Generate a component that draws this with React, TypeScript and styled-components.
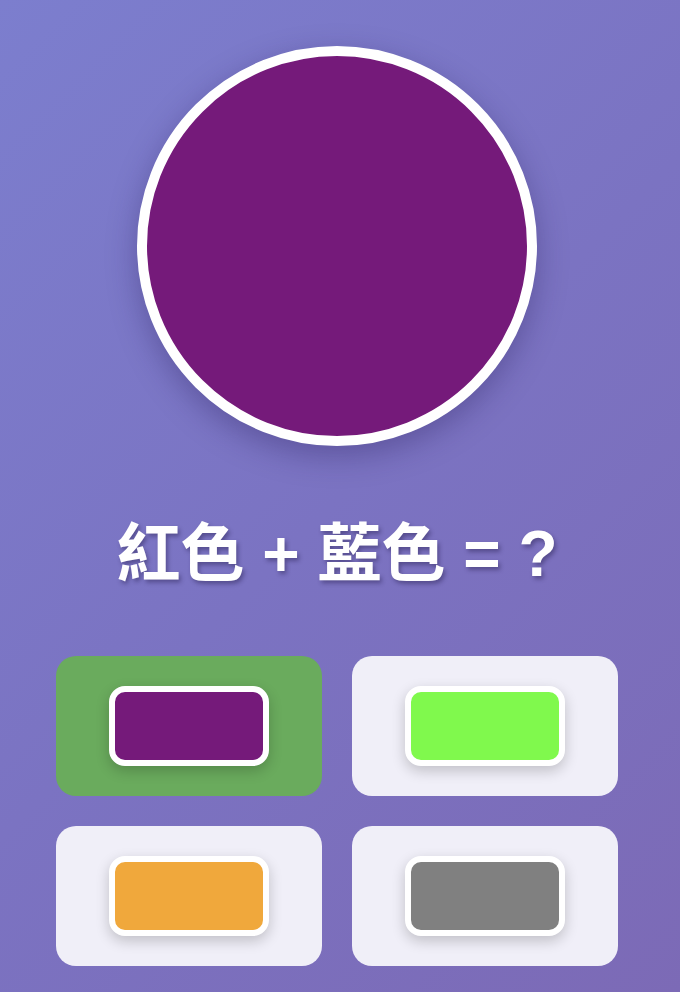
import React from "react";
import styled, { createGlobalStyle } from "styled-components";

const Global = createGlobalStyle`
  html, body { margin: 0; padding: 0; }
  body {
    width: 680px;
    min-height: 992px;
    background: linear-gradient(135deg, #7c7ece 0%, #7b73c2 50%, #7c6ab6 100%);
    font-family: "Liberation Sans", "Noto Sans CJK TC", sans-serif;
    overflow: hidden;
  }
`;

const Page = styled.div`
  width: 674px;
  height: 992px;
  display: flex;
  flex-direction: column;
  align-items: center;
  padding-top: 46px;
  box-sizing: border-box;
`;

const Circle = styled.div<{ $color: string }>`
  width: 400px;
  height: 400px;
  box-sizing: border-box;
  border-radius: 50%;
  border: 10px solid #fff;
  background: ${(p) => p.$color};
  box-shadow: 0 10px 30px rgba(40, 30, 90, 0.35);
`;

const Question = styled.h1`
  margin: 63px 0 0;
  color: #fff;
  font-size: 64px;
  font-weight: 700;
  line-height: 90px;
  text-shadow: 2px 3px 4px rgba(40, 30, 80, 0.45);
  white-space: nowrap;
`;

const Grid = styled.div`
  margin-top: 57px;
  display: grid;
  grid-template-columns: 266px 266px;
  gap: 30px;
`;

const Option = styled.button<{ $selected?: boolean }>`
  height: 140px;
  border: none;
  border-radius: 20px;
  background: ${(p) => (p.$selected ? "#6aab5d" : "#f0eff8")};
  display: flex;
  align-items: center;
  justify-content: center;
  padding: 0;
  cursor: pointer;
`;

const Swatch = styled.div<{ $color: string }>`
  width: 160px;
  height: 80px;
  box-sizing: border-box;
  border: 6px solid #fff;
  border-radius: 16px;
  background: ${(p) => p.$color};
  box-shadow: 0 5px 14px rgba(0, 0, 0, 0.2);
`;

const options = [
  { color: "#751a7a", selected: true },
  { color: "#80f94d" },
  { color: "#f0a83c" },
  { color: "#808080" },
];

export default function App() {
  return (
    <>
      <Global />
      <Page>
        <Circle $color="#751a7a" />
        <Question>紅色 + 藍色 = ?</Question>
        <Grid>
          {options.map((o, i) => (
            <Option key={i} $selected={o.selected}>
              <Swatch $color={o.color} />
            </Option>
          ))}
        </Grid>
      </Page>
    </>
  );
}
